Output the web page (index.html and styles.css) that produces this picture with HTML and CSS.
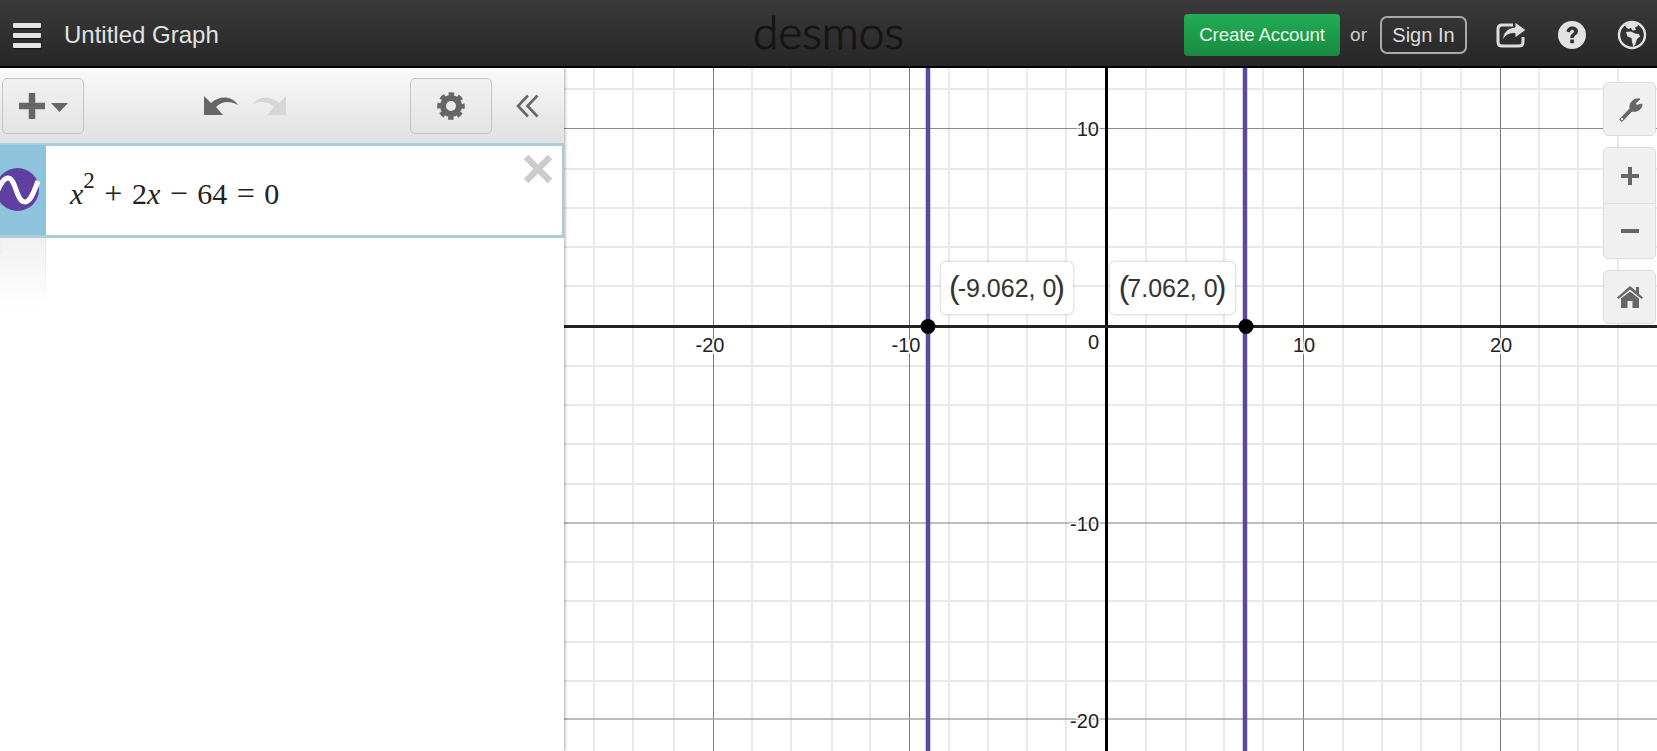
FILE: index.html
```html
<!DOCTYPE html>
<html lang="en">
<head>
<meta charset="utf-8">
<title>Untitled Graph - Desmos</title>
<link rel="stylesheet" href="styles.css">
</head>
<body>
<header class="topbar">
  <div class="top-left">
    <div class="burger"><i></i><i></i><i></i></div>
    <span class="title">Untitled Graph</span>
  </div>
  <div class="logo">desmos</div>
  <div class="top-right">
    <button class="create">Create Account</button>
    <span class="or">or</span>
    <button class="signin">Sign In</button>
    <svg class="ic-share" width="30" height="26" viewBox="0 0 30 26">
      <path d="M17 3H6Q2 3 2 7V20Q2 24 6 24H23Q27 24 27 20V15" fill="none" stroke="#ddd" stroke-width="3"/>
      <path d="M19 0L30 8L19 16V11.5C13 11.5 9 13 6.5 19C6.5 11 11 6 19 5Z" fill="#ddd" stroke="#333" stroke-width="1"/>
    </svg>
    <svg class="ic-help" width="30" height="30" viewBox="0 0 30 30">
      <circle cx="15" cy="15" r="14" fill="#e2e2e2"/>
      <path d="M9.5 11.5C10 8 12.5 6.5 15.2 6.5C18.5 6.5 21 8.6 21 11.2C21 15 16.8 15 16.8 18H13.2C13.2 13.4 17 13.3 17 11.4C17 10.3 16.2 9.8 15.1 9.8C14 9.8 13.2 10.6 12.8 12.4Z" fill="#333"/>
      <rect x="13.2" y="19.5" width="3.7" height="3.7" fill="#333"/>
    </svg>
    <svg class="ic-globe" width="30" height="30" viewBox="0 0 30 30">
      <circle cx="15" cy="15" r="13" fill="#333" stroke="#e2e2e2" stroke-width="2.4"/>
      <path d="M8 5L13 2.5L20 3L21 6L18 7.5L19 10L15.5 10.5L14 8L11 9L9 7Z" fill="#e2e2e2"/>
      <path d="M9 12L14 11.5L18 13.5L22 14L23 16.5L20 19L18.5 24L16.5 27L15 22L14.5 18L10.5 16.5Z" fill="#e2e2e2"/>
    </svg>
  </div>
</header>

<main class="workspace">
  <aside class="sidebar">
    <div class="toolbar">
      <button class="tool-btn add">
        <svg width="49" height="26" viewBox="0 0 49 26">
          <path d="M0 13H26M13 0V26" stroke="#666" stroke-width="6.5" stroke-linejoin="round"/>
          <path d="M32 10H49L40.500 19Z" fill="#666"/>
        </svg>
      </button>
      <div class="history">
        <svg width="34" height="20" viewBox="0 0 34 20"><path d="M0 19V0L7 7C15 0 27 -1 34 9C26 4.500 18 5 12 11L19 19Z" fill="#666"/></svg>
        <svg width="34" height="20" viewBox="0 0 34 20"><path d="M34 19V0L27 7C19 0 7 -1 0 9C8 4.500 16 5 22 11L15 19Z" fill="#d6d6d6"/></svg>
      </div>
      <button class="tool-btn settings">
        <svg width="28" height="28" viewBox="0 0 28 28">
          <circle cx="14" cy="14" r="8" fill="none" stroke="#666" stroke-width="6"/>
          <circle cx="14" cy="14" r="12" fill="none" stroke="#666" stroke-width="3.600" stroke-dasharray="5.400 4.025" stroke-dashoffset="2.700"/>
        </svg>
      </button>
      <svg class="collapse" width="23" height="24" viewBox="0 0 23 24"><path d="M12 1.500L2 12L12 22.500M21.500 1.500L11.500 12L21.500 22.500" fill="none" stroke="#666" stroke-width="2.600"/></svg>
    </div>
    <div class="expr">
      <div class="expr-tab">
        <svg width="46" height="92" viewBox="0 0 46 92">
          <circle cx="17.500" cy="44.500" r="21.500" fill="#5f3fa0"/>
          <path d="M-3 47C1 38 4 33 8 33C16 33 16 57 25 57C31 57 34 46 38 36" fill="none" stroke="#fff" stroke-width="5"/>
        </svg>
      </div>
      <div class="math"><i>x</i><sup>2</sup><span class="op">+</span>2<i>x</i><span class="op">&#8722;</span>64<span class="op">=</span>0</div>
      <svg class="remove" width="30" height="30" viewBox="0 0 30 30"><path d="M3 3L27 27M27 3L3 27" stroke="#ccc" stroke-width="6.500"/></svg>
    </div>
    <div class="expr-empty">
      <div class="empty-tab"><span class="idx">2</span></div>
    </div>
  </aside>

  <section class="graph">
    <svg class="plot" viewBox="564 68 1093 683" width="1093" height="683">
      <g class="minor-v">
        <path d="M594 68V751M633 68V751M674 68V751M752 68V751M791 68V751M832 68V751M870 68V751M949 68V751M988 68V751M1027 68V751M1066 68V751M1146 68V751M1186 68V751M1224 68V751M1263 68V751M1343 68V751M1382 68V751M1421 68V751M1461 68V751M1539 68V751M1578 68V751M1618 68V751"/>
      </g>
      <g class="minor-h">
        <path d="M564 89H1657M564 169H1657M564 208H1657M564 247H1657M564 286H1657M564 366H1657M564 405H1657M564 444H1657M564 484H1657M564 562H1657M564 601H1657M564 642H1657M564 681H1657"/>
      </g>
      <g class="major">
        <path d="M713.500 68V751M909.500 68V751M1303.500 68V751M1500.500 68V751"/>
      </g>
      <g class="major-h">
        <path d="M564 523H1657M564 719H1657"/>
      </g>
      <path class="major-top" d="M564 128.500H1657"/>
      <path class="axis-y" d="M1106.500 68V751"/>
      <path class="axis-x" d="M564 326.500H1657"/>
      <path class="curve" d="M928 68V751M1245 68V751"/>
      <circle cx="928" cy="326.500" r="7.500"/>
      <circle cx="1246" cy="326.500" r="7.500"/>
      <g class="labels">
        <text x="710" y="352">-20</text>
        <text x="906" y="352">-10</text>
        <text x="1304" y="352">10</text>
        <text x="1501" y="352">20</text>
        <text class="end" x="1099" y="349">0</text>
        <text class="end" x="1099" y="136">10</text>
        <text class="end" x="1099" y="531">-10</text>
        <text class="end" x="1099" y="728">-20</text>
      </g>
    </svg>
    <div class="tip tip-a"><span class="paren">(</span>-9.062, 0<span class="paren">)</span></div>
    <div class="tip tip-b"><span class="paren">(</span>7.062, 0<span class="paren">)</span></div>
    <div class="controls">
      <div class="ctl-box">
        <div class="ctl">
          <svg width="26" height="26" viewBox="0 0 26 26"><path d="M2.500 23.500L13 12.500C12 7 16.500 2 23 3L18.500 7L19.500 9.500L25 8C25 13 20 16.500 15 15L5 25.500Z" fill="#666" stroke="#666" stroke-width="1" stroke-linejoin="round"/><circle cx="5" cy="23" r="1.200" fill="#eee"/></svg>
        </div>
      </div>
      <div class="ctl-box">
        <div class="ctl ctl-zoom">
          <svg width="20" height="20" viewBox="0 0 20 20"><path d="M1 10H19M10 1V19" stroke="#666" stroke-width="4"/></svg>
        </div>
        <div class="ctl ctl-zoom sep">
          <svg width="20" height="20" viewBox="0 0 20 20"><path d="M1 10H19" stroke="#666" stroke-width="4"/></svg>
        </div>
      </div>
      <div class="ctl-box">
        <div class="ctl">
          <svg width="26" height="22" viewBox="0 0 26 22"><path d="M13 0L19 5V1H22V8L26 11.500L24.500 13L13 3.500L1.500 13L0 11.500Z" fill="#666"/><path d="M4 12.500L13 5.500L22 12.500V22H15.500V15H10.500V22H4Z" fill="#666"/></svg>
        </div>
      </div>
    </div>
  </section>
</main>
</body>
</html>
```
FILE: styles.css
```css
* { box-sizing: border-box; }
html, body { margin: 0; height: 100%; overflow: hidden; }
body { display: flex; flex-direction: column; width: 1657px; height: 751px; font-family: "Liberation Sans", Arial, sans-serif; background: #fff; }
button { font-family: inherit; padding: 0; cursor: pointer; }

.topbar { height: 68px; flex: none; display: grid; grid-template-columns: 1fr auto 1fr; align-items: center; padding-top: 4px; background: linear-gradient(#3a3a3a, #272727); border-bottom: 2px solid #000; position: relative; }
.top-left { display: flex; align-items: center; padding-left: 13px; }
.burger { display: flex; flex-direction: column; gap: 5px; width: 28px; margin-right: 23px; }
.burger i { display: block; height: 5px; background: #e4e4e4; border-radius: 1px; box-shadow: 0 1px 1px #111; }
.title { color: #e2e2e2; font-size: 24px; }
.logo { color: #151515; font-family: Lato, sans-serif; font-weight: 300; font-size: 46px; line-height: 50px; letter-spacing: 0; -webkit-text-stroke: 1px #151515; margin-top: -6px; }
.top-right { display: flex; align-items: center; justify-content: flex-start; margin-left: 280px; }
.create { width: 156px; height: 42px; background: linear-gradient(#23ad56, #178b41); color: #e4f6ea; border: 0; border-radius: 4px; font-size: 18.800px; letter-spacing: -0.2px; margin-right: 10px; }
.or { color: #ccc; font-size: 19px; margin-right: 13px; }
.signin { width: 87px; height: 38px; background: transparent; color: #ddd; border: 2px solid #aaa; border-radius: 7px; font-size: 20px; margin-right: 29px; }
.ic-share { margin-right: 31px; }
.ic-help { margin-right: 30px; }

.workspace { flex: 1; display: flex; min-height: 0; }
.sidebar { width: 564px; flex: none; display: flex; flex-direction: column; background: #fff; box-shadow: 1px 0 3px rgba(0,0,0,.35); position: relative; z-index: 2; }
.toolbar { height: 75px; flex: none; display: flex; align-items: center; padding: 10px 0 10px 2px; background: linear-gradient(#fafafa, #e0e0e0); }
.tool-btn { height: 56px; display: flex; align-items: center; justify-content: center; background: linear-gradient(#f1f1f1, #e4e4e4); border: 1.500px solid #c4c4c4; border-radius: 5px; }
.add { width: 82px; }
.history { width: 326px; display: flex; justify-content: center; gap: 14px; padding-right: 5px; }
.settings { width: 82px; }
.collapse { margin-left: 24px; }

.expr { height: 95px; flex: none; display: flex; position: relative; border: solid #a9cdd9; border-width: 3px 2px 3px 0; background: #fff; }
.expr-tab { width: 46px; flex: none; background: #8dc3dd; overflow: hidden; margin-top: -1px; }
.expr-tab svg { display: block; }
.math { font-family: "Liberation Serif", serif; font-size: 30px; color: #222; padding: 31px 0 0 24px; line-height: 34px; white-space: nowrap; }
.math i { font-style: italic; }
.math sup { font-size: 23px; line-height: 0; position: relative; top: -5px; vertical-align: super; }
.op { margin: 0 9.500px; font-size: 32px; line-height: 0; }
.remove { position: absolute; right: 9px; top: 8px; }
.expr-empty { height: 72px; flex: none; }
.empty-tab { width: 46px; height: 100%; background: linear-gradient(#f1f1f1, #fff); border-right: 1.500px solid; border-image: linear-gradient(#e4e4e4, #fff) 1; overflow: hidden; }
.idx { display: block; margin-left: -7px; font-size: 14px; color: #bbb; line-height: 20px; }

.graph { flex: 1; position: relative; overflow: hidden; background: #fff; }
.plot { display: block; }
.minor-v path { stroke: #dedede; stroke-width: 1.300; fill: none; }
.minor-h path { stroke: #e8e8e8; stroke-width: 1.800; fill: none; }
.major path { stroke: #7a7a7a; stroke-width: 1; fill: none; }
.major-h path { stroke: #a6a6a6; stroke-width: 1.600; fill: none; }
.major-top { stroke: #8a8a8a; stroke-width: 1; }
.axis-y { stroke: #000; stroke-width: 3; }
.axis-x { stroke: #222; stroke-width: 3; }
.curve { stroke: #5c489c; stroke-width: 4.500; fill: none; }
.plot circle { fill: #000; }
.labels text { font-family: "Liberation Sans", Arial, sans-serif; font-size: 20px; fill: #222; text-anchor: middle; paint-order: stroke; stroke: #fff; stroke-width: 3px; }
.labels .end { text-anchor: end; }

.tip { position: absolute; top: 194px; height: 52px; display: flex; align-items: center; justify-content: center; background: #fff; border-radius: 5px; box-shadow: 0 0 3px rgba(0,0,0,.3); font-size: 25px; color: #333; white-space: nowrap; }
.paren { font-size: 32px; font-weight: 400; margin: -2px -2px 0; }
.tip-a { left: 377px; width: 132px; }
.tip-b { left: 546px; width: 125px; }

.controls { position: absolute; right: 1px; top: 14px; width: 53px; display: flex; flex-direction: column; gap: 11px; }
.ctl-box { background: #f0f0f0; border: 1.500px solid #dcdcdc; border-radius: 5px; flex: none; }
.ctl { height: 52px; display: flex; align-items: center; justify-content: center; }
.ctl-zoom { height: 55px; }
.sep { border-top: 1.500px solid #dcdcdc; }
```
